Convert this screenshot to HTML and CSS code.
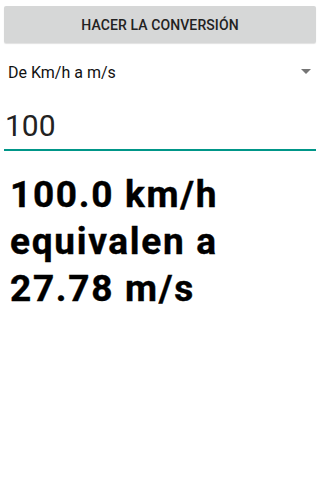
FILE: index.html
```html
<!DOCTYPE html>
<html>
<head>
<meta charset="utf-8">
<link rel="stylesheet" href="styles.css">
</head>
<body>
<div class="app">
  <button class="btn">HACER LA CONVERSIÓN</button>
  <div class="spinner">
    <span class="spinner-text">De Km/h a m/s</span>
    <svg class="arrow" width="10" height="5" viewBox="0 0 10 5"><path d="M0 0H10L5 5Z" fill="#757575"/></svg>
  </div>
  <div class="field">
    <div class="field-value">100</div>
  </div>
  <div class="result">100.0 km/h equivalen a 27.78 m/s</div>
</div>
</body>
</html>
```
FILE: styles.css
```css
html, body {
  margin: 0;
  padding: 0;
  background: #fff;
}
body {
  font-family: Roboto, "Liberation Sans", sans-serif;
  width: 320px;
  height: 480px;
  overflow: hidden;
}
.app {
  display: flex;
  flex-direction: column;
  padding: 6px 4px 0 4px;
}
.btn {
  height: 37px;
  border: none;
  border-radius: 2px;
  background: #d6d7d7;
  color: #222;
  font-family: Roboto, "Liberation Sans", sans-serif;
  font-weight: 500;
  font-size: 14px;
  letter-spacing: 0.1px;
  padding: 0;
  box-shadow: 0 1px 1px rgba(0,0,0,0.12);
}
.spinner {
  display: flex;
  align-items: center;
  justify-content: space-between;
  height: 48px;
  padding: 0 4px 0 4px;
  margin-top: 5px;
}
.spinner-text {
  font-size: 16px;
  color: #111;
}
.arrow {
  display: block;
  margin-right: 1px;
  margin-top: -2px;
}
.field {
  margin-top: 12px;
  border-bottom: 2px solid #009688;
  padding: 0 0 6px 1px;
}
.field-value {
  font-size: 30px;
  line-height: 35px;
  color: #222;
}
.result {
  margin-top: 20px;
  padding-left: 6px;
  font-size: 37px;
  font-weight: 700;
  line-height: 47px;
  letter-spacing: 1.7px;
  color: #000;
  width: 300px;
  -webkit-text-stroke: 0.4px #000;
}
```
